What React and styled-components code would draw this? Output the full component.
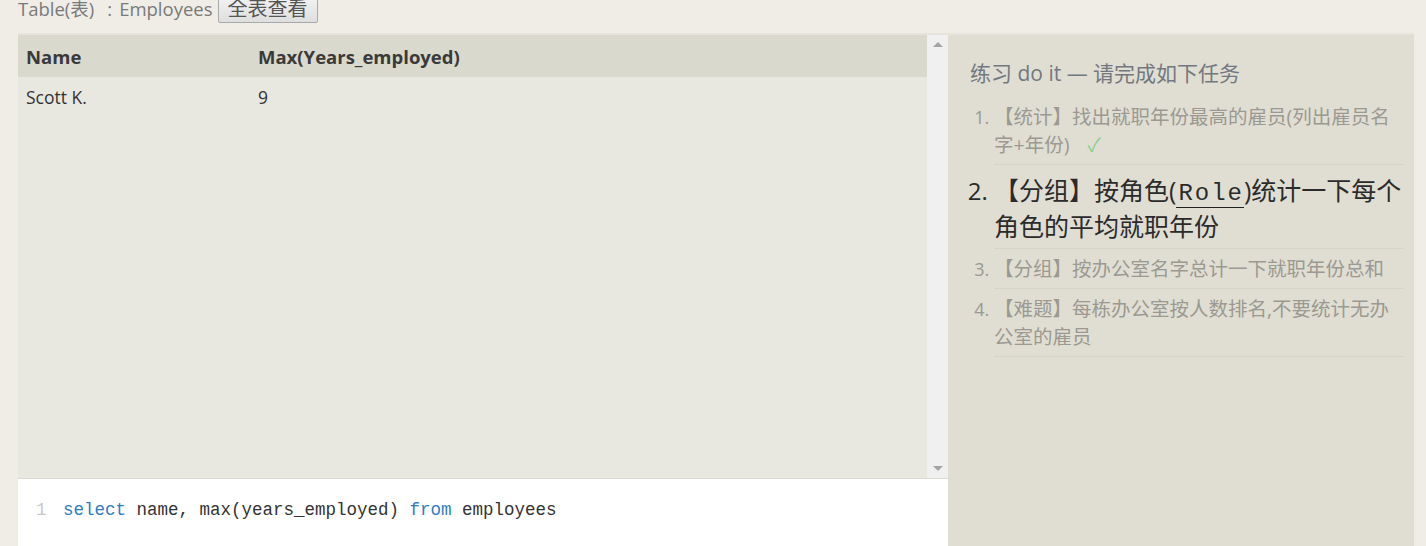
import React from 'react'
import styled, { createGlobalStyle } from 'styled-components'

const GlobalStyle = createGlobalStyle`
  html, body {
    margin: 0;
    padding: 0;
    background: #efede6;
    overflow: hidden;
  }
  body {
    font-family: "Open Sans", "Noto Sans CJK SC", sans-serif;
    color: #333;
  }
`

const Page = styled.div`
  width: 1426px;
  height: 546px;
  overflow: hidden;`

const TopBar = styled.div`
  display: flex;
  align-items: center;
  gap: 5px;
  height: 31px;
  margin-top: -8px;
  margin-bottom: 10px;
  padding-left: 18px;
  font-size: 18.5px;
  color: #7a7a7a;`

const Colon = styled.span`
  margin: 0 7px 0 13px;`

const ViewAllButton = styled.button`
  height: 31px;
  padding: 0 9px;
  font-family: "Noto Sans CJK SC", sans-serif;
  font-size: 20px;
  color: #555;
  background: linear-gradient(#f6f6f6, #dedede);
  border: 1px solid #a9a9a9;
  border-radius: 2px;`

const Main = styled.div`
  display: flex;
  padding: 0 12px 0 18px;
  height: 513px;`

const LeftCol = styled.div`
  width: 930px;
  display: flex;
  flex-direction: column;`

const TableBox = styled.div`
  display: flex;
  height: 443px;
  border-top: 2px solid #e5e3da;
  background: #e9e8e0;
  border-bottom: 1px solid #dcdad2;`

const TableScroll = styled.div`
  flex: 1;
  overflow: hidden;`

const Table = styled.table`
  width: 100%;
  border-collapse: collapse;`

const Th = styled.th`
  text-align: left;
  background: #dad9cd;
  height: 41px;
  padding: 1px 8px 0;
  font-size: 18.5px;
  font-weight: 700;
  color: #3a3a3a;
  width: ${p => p.w || 'auto'};`

const Td = styled.td`
  height: 39px;
  padding: 0 8px;
  font-size: 17.5px;
  color: #333;`

const ScrollBar = styled.div`
  width: 21px;
  background: #f0f0f0;
  display: flex;
  flex-direction: column;
  justify-content: space-between;
  align-items: center;
  padding: 7px 0;`

const Arrow = styled.div`
  width: 0;
  height: 0;
  border-left: 5px solid transparent;
  border-right: 5px solid transparent;
  ${p => p.down ? 'border-top: 5px solid #a3a3a3;' : 'border-bottom: 5px solid #a3a3a3;'}`

const Editor = styled.div`
  flex: 1;
  background: #fff;
  display: flex;
  align-items: flex-start;
  padding: 21px 0 0 18px;
  font-family: "Liberation Mono", monospace;
  font-size: 17.5px;
  color: #333;`

const LineNo = styled.span`
  color: #c8c8c8;
  width: 27px;`

const Kw = styled.span`
  color: #2f7dc1;`

const RightCol = styled.div`
  flex: 1;
  background: #e0ded3;
  border-top: 2px solid #e6e4db;
  padding: 24px 10px 0 22px;`

const Title = styled.div`
  font-size: 21px;
  line-height: 28px;
  color: #737880;
  margin-bottom: 10px;`

const TaskList = styled.ol`
  margin: 0;
  padding-left: 24px;`

const Task = styled.li`
  font-size: ${p => p.active ? '25px' : '19.5px'};
  line-height: ${p => p.active ? '36px' : '28px'};
  color: ${p => p.active ? '#2b2b2b' : '#9b9991'};
  padding: ${p => p.active ? '7px 0 4px' : '6px 0 5px'};
  border-bottom: 1px solid #d6d4c9;
  &::marker {
    font-family: "Open Sans", sans-serif;
    font-size: ${p => p.active ? '24px' : '18px'};
  }`

const Code = styled.span`
  font-family: "Liberation Mono", monospace;
  font-size: 24px;
  letter-spacing: 2px;
  padding-left: 2px;
  border-bottom: 1px solid #222;
  line-height: 1;`

const Check = styled.span`
  color: #8ccf8c;
  margin-left: 18px;`

export default function App() {
  return (
    <Page>
      <GlobalStyle />
      <TopBar>
        <span>Table(表)<Colon>:</Colon>Employees</span>
        <ViewAllButton>全表查看</ViewAllButton>
      </TopBar>
      <Main>
        <LeftCol>
          <TableBox>
            <TableScroll>
              <Table>
                <thead>
                  <tr>
                    <Th w="216px">Name</Th>
                    <Th>Max(Years_employed)</Th>
                  </tr>
                </thead>
                <tbody>
                  <tr>
                    <Td>Scott K.</Td>
                    <Td>9</Td>
                  </tr>
                </tbody>
              </Table>
            </TableScroll>
            <ScrollBar>
              <Arrow />
              <Arrow down />
            </ScrollBar>
          </TableBox>
          <Editor>
            <LineNo>1</LineNo>
            <span><Kw>select</Kw> name, max(years_employed) <Kw>from</Kw> employees</span>
          </Editor>
        </LeftCol>
        <RightCol>
          <Title>练习 do it — 请完成如下任务</Title>
          <TaskList>
            <Task>【统计】找出就职年份最高的雇员(列出雇员名字+年份)<Check>✓</Check></Task>
            <Task active>【分组】按角色(<Code>Role</Code>)统计一下每个角色的平均就职年份</Task>
            <Task>【分组】按办公室名字总计一下就职年份总和</Task>
            <Task>【难题】每栋办公室按人数排名,不要统计无办公室的雇员</Task>
          </TaskList>
        </RightCol>
      </Main>
    </Page>
  )
}
